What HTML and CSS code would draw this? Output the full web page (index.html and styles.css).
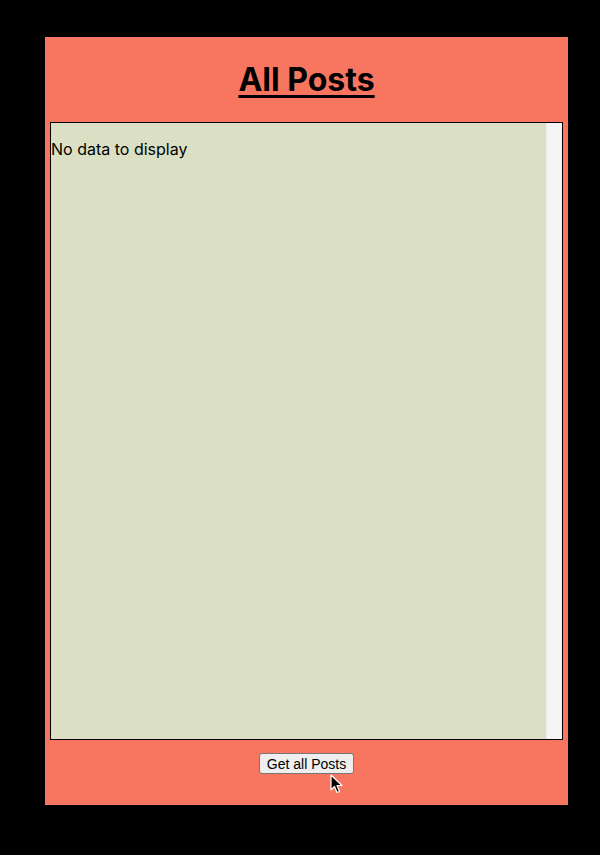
FILE: index.html
```html
<!DOCTYPE html>
<html>
<head>
<meta charset="utf-8">
<link rel="stylesheet" href="styles.css">
</head>
<body>
<div class="panel">
  <header class="head"><h1 class="title">All Posts</h1></header>
  <div class="list">
    <div class="list-content"><p class="empty">No data to display</p></div>
    <div class="scrollbar"></div>
  </div>
  <div class="actions">
    <button class="btn">Get all Posts</button>
    <svg class="cursor" width="14" height="20" viewBox="0 0 14 20"><path d="M1 1 L1 16 L4.5 12.5 L7 18.5 L9.5 17.5 L7 11.5 L12 11.5 Z" fill="#000" stroke="#fff" stroke-width="1.2" stroke-linejoin="round"/></svg>
  </div>
</div>
</body>
</html>
```
FILE: styles.css
```css
html, body { margin: 0; padding: 0; background: #000; }
body { width: 600px; height: 855px; overflow: hidden; }
.panel {
  margin: 37px 0 0 45px;
  width: 523px;
  height: 768px;
  background: #f8755f;
  padding: 0 5px;
  box-sizing: border-box;
  display: flex;
  flex-direction: column;
}
.head { height: 85px; display: flex; align-items: center; justify-content: center; }
.title {
  margin: 0;
  font-family: Inter, "Liberation Sans", sans-serif;
  font-weight: 700;
  font-size: 32px;
  text-decoration: underline;
  text-decoration-thickness: 3px;
  text-underline-offset: 4px;
  color: #000;
  position: relative;
  top: 0;
}
.list {
  height: 618px;
  border: 1px solid #000;
  box-sizing: border-box;
  background: #dbe0c5;
  display: flex;
}
.list-content { flex: 1; }
.empty {
  margin: 17px 0 0 0;
  font-family: Inter, "Liberation Sans", sans-serif;
  font-size: 16px;
  line-height: 19px;
  color: #000;
}
.scrollbar { width: 15px; background: #f5f5f5; border-left: 1px solid #ececec; }
.actions {
  flex: 1;
  display: flex;
  justify-content: center;
  align-items: flex-start;
  padding-top: 13px;
  position: relative;
}
.btn {
  font-family: "Liberation Sans", Arial, sans-serif;
  font-size: 14px;
  height: 21px;
  padding: 0 7px;
  background: #efefef;
  border: 1px solid #767676;
  border-radius: 3px;
  color: #000;
  margin-left: 0;
}
.cursor { position: absolute; left: 280px; top: 34px; }
```
